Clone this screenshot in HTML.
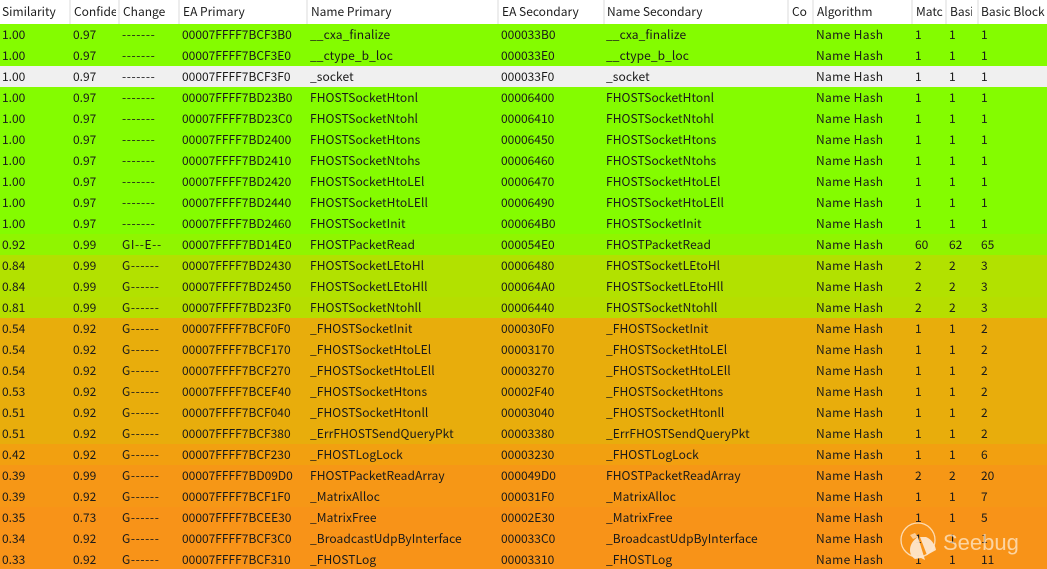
<!DOCTYPE html>
<html><head><meta charset="utf-8"><style>
html,body{margin:0;padding:0;width:1047px;height:569px;overflow:hidden;background:#fff}
body{position:relative;font-family:"Noto Sans CJK SC","Liberation Sans",sans-serif;font-size:12px;color:#1a1a1a}
table{position:absolute;left:0;top:0;width:1047px;table-layout:fixed;border-collapse:collapse}
td,th{padding:0 0 0 3px;height:21px;line-height:21px;white-space:nowrap;overflow:hidden;font-weight:normal;text-align:left;box-sizing:border-box}
th{height:24px;line-height:24px;background:#fff;border-right:2px solid #ededed;color:#1c1c1c}
th div{overflow:hidden;margin-right:2px}
th:nth-child(8) div{margin-right:5px}
th:nth-child(11) div{margin-right:5px}
th:last-child{border-right:0}
td:nth-child(1),th:nth-child(1),td:nth-child(7),th:nth-child(7),th:nth-child(12){padding-left:2px}
td:nth-child(3){padding-left:3px;letter-spacing:.6px}
td:nth-child(9){letter-spacing:.35px}
td:nth-child(5),td:nth-child(7){letter-spacing:.08px}
.a{background:#84fc00}.w{background:#f0f0f0}.b{background:#90f500}.c{background:#b2e100}.c2{background:#b6de00}
.d{background:#e8ad0c}.e{background:#f2a010}.f{background:#f69716}.g{background:#f89318}
</style></head><body>
<table><colgroup><col style="width:70px"><col style="width:49px"><col style="width:60px"><col style="width:128px"><col style="width:191px"><col style="width:106px"><col style="width:184px"><col style="width:25px"><col style="width:99px"><col style="width:34px"><col style="width:32px"><col style="width:69px"></colgroup>
<tr><th><div>Similarity</div></th><th><div>Confidence</div></th><th><div>Change</div></th><th><div>EA Primary</div></th><th><div>Name Primary</div></th><th><div>EA Secondary</div></th><th><div>Name Secondary</div></th><th><div>Comments</div></th><th><div>Algorithm</div></th><th><div>Matched</div></th><th><div>Basic</div></th><th><div>Basic Blocks</div></th></tr>
<tr class="a"><td>1.00</td><td>0.97</td><td>-------</td><td>00007FFFF7BCF3B0</td><td>__cxa_finalize</td><td>000033B0</td><td>__cxa_finalize</td><td></td><td>Name Hash</td><td>1</td><td>1</td><td>1</td></tr>
<tr class="a"><td>1.00</td><td>0.97</td><td>-------</td><td>00007FFFF7BCF3E0</td><td>__ctype_b_loc</td><td>000033E0</td><td>__ctype_b_loc</td><td></td><td>Name Hash</td><td>1</td><td>1</td><td>1</td></tr>
<tr class="w"><td>1.00</td><td>0.97</td><td>-------</td><td>00007FFFF7BCF3F0</td><td>_socket</td><td>000033F0</td><td>_socket</td><td></td><td>Name Hash</td><td>1</td><td>1</td><td>1</td></tr>
<tr class="a"><td>1.00</td><td>0.97</td><td>-------</td><td>00007FFFF7BD23B0</td><td>FHOSTSocketHtonl</td><td>00006400</td><td>FHOSTSocketHtonl</td><td></td><td>Name Hash</td><td>1</td><td>1</td><td>1</td></tr>
<tr class="a"><td>1.00</td><td>0.97</td><td>-------</td><td>00007FFFF7BD23C0</td><td>FHOSTSocketNtohl</td><td>00006410</td><td>FHOSTSocketNtohl</td><td></td><td>Name Hash</td><td>1</td><td>1</td><td>1</td></tr>
<tr class="a"><td>1.00</td><td>0.97</td><td>-------</td><td>00007FFFF7BD2400</td><td>FHOSTSocketHtons</td><td>00006450</td><td>FHOSTSocketHtons</td><td></td><td>Name Hash</td><td>1</td><td>1</td><td>1</td></tr>
<tr class="a"><td>1.00</td><td>0.97</td><td>-------</td><td>00007FFFF7BD2410</td><td>FHOSTSocketNtohs</td><td>00006460</td><td>FHOSTSocketNtohs</td><td></td><td>Name Hash</td><td>1</td><td>1</td><td>1</td></tr>
<tr class="a"><td>1.00</td><td>0.97</td><td>-------</td><td>00007FFFF7BD2420</td><td>FHOSTSocketHtoLEl</td><td>00006470</td><td>FHOSTSocketHtoLEl</td><td></td><td>Name Hash</td><td>1</td><td>1</td><td>1</td></tr>
<tr class="a"><td>1.00</td><td>0.97</td><td>-------</td><td>00007FFFF7BD2440</td><td>FHOSTSocketHtoLEll</td><td>00006490</td><td>FHOSTSocketHtoLEll</td><td></td><td>Name Hash</td><td>1</td><td>1</td><td>1</td></tr>
<tr class="a"><td>1.00</td><td>0.97</td><td>-------</td><td>00007FFFF7BD2460</td><td>FHOSTSocketInit</td><td>000064B0</td><td>FHOSTSocketInit</td><td></td><td>Name Hash</td><td>1</td><td>1</td><td>1</td></tr>
<tr class="b"><td>0.92</td><td>0.99</td><td>GI--E--</td><td>00007FFFF7BD14E0</td><td>FHOSTPacketRead</td><td>000054E0</td><td>FHOSTPacketRead</td><td></td><td>Name Hash</td><td>60</td><td>62</td><td>65</td></tr>
<tr class="c"><td>0.84</td><td>0.99</td><td>G------</td><td>00007FFFF7BD2430</td><td>FHOSTSocketLEtoHl</td><td>00006480</td><td>FHOSTSocketLEtoHl</td><td></td><td>Name Hash</td><td>2</td><td>2</td><td>3</td></tr>
<tr class="c"><td>0.84</td><td>0.99</td><td>G------</td><td>00007FFFF7BD2450</td><td>FHOSTSocketLEtoHll</td><td>000064A0</td><td>FHOSTSocketLEtoHll</td><td></td><td>Name Hash</td><td>2</td><td>2</td><td>3</td></tr>
<tr class="c2"><td>0.81</td><td>0.99</td><td>G------</td><td>00007FFFF7BD23F0</td><td>FHOSTSocketNtohll</td><td>00006440</td><td>FHOSTSocketNtohll</td><td></td><td>Name Hash</td><td>2</td><td>2</td><td>3</td></tr>
<tr class="d"><td>0.54</td><td>0.92</td><td>G------</td><td>00007FFFF7BCF0F0</td><td>_FHOSTSocketInit</td><td>000030F0</td><td>_FHOSTSocketInit</td><td></td><td>Name Hash</td><td>1</td><td>1</td><td>2</td></tr>
<tr class="d"><td>0.54</td><td>0.92</td><td>G------</td><td>00007FFFF7BCF170</td><td>_FHOSTSocketHtoLEl</td><td>00003170</td><td>_FHOSTSocketHtoLEl</td><td></td><td>Name Hash</td><td>1</td><td>1</td><td>2</td></tr>
<tr class="d"><td>0.54</td><td>0.92</td><td>G------</td><td>00007FFFF7BCF270</td><td>_FHOSTSocketHtoLEll</td><td>00003270</td><td>_FHOSTSocketHtoLEll</td><td></td><td>Name Hash</td><td>1</td><td>1</td><td>2</td></tr>
<tr class="d"><td>0.53</td><td>0.92</td><td>G------</td><td>00007FFFF7BCEF40</td><td>_FHOSTSocketHtons</td><td>00002F40</td><td>_FHOSTSocketHtons</td><td></td><td>Name Hash</td><td>1</td><td>1</td><td>2</td></tr>
<tr class="d"><td>0.51</td><td>0.92</td><td>G------</td><td>00007FFFF7BCF040</td><td>_FHOSTSocketHtonll</td><td>00003040</td><td>_FHOSTSocketHtonll</td><td></td><td>Name Hash</td><td>1</td><td>1</td><td>2</td></tr>
<tr class="d"><td>0.51</td><td>0.92</td><td>G------</td><td>00007FFFF7BCF380</td><td>_ErrFHOSTSendQueryPkt</td><td>00003380</td><td>_ErrFHOSTSendQueryPkt</td><td></td><td>Name Hash</td><td>1</td><td>1</td><td>2</td></tr>
<tr class="e"><td>0.42</td><td>0.92</td><td>G------</td><td>00007FFFF7BCF230</td><td>_FHOSTLogLock</td><td>00003230</td><td>_FHOSTLogLock</td><td></td><td>Name Hash</td><td>1</td><td>1</td><td>6</td></tr>
<tr class="f"><td>0.39</td><td>0.99</td><td>G------</td><td>00007FFFF7BD09D0</td><td>FHOSTPacketReadArray</td><td>000049D0</td><td>FHOSTPacketReadArray</td><td></td><td>Name Hash</td><td>2</td><td>2</td><td>20</td></tr>
<tr class="f"><td>0.39</td><td>0.92</td><td>G------</td><td>00007FFFF7BCF1F0</td><td>_MatrixAlloc</td><td>000031F0</td><td>_MatrixAlloc</td><td></td><td>Name Hash</td><td>1</td><td>1</td><td>7</td></tr>
<tr class="g"><td>0.35</td><td>0.73</td><td>G------</td><td>00007FFFF7BCEE30</td><td>_MatrixFree</td><td>00002E30</td><td>_MatrixFree</td><td></td><td>Name Hash</td><td>1</td><td>1</td><td>5</td></tr>
<tr class="g"><td>0.34</td><td>0.92</td><td>G------</td><td>00007FFFF7BCF3C0</td><td>_BroadcastUdpByInterface</td><td>000033C0</td><td>_BroadcastUdpByInterface</td><td></td><td>Name Hash</td><td>1</td><td>1</td><td>1</td></tr>
<tr class="g"><td>0.33</td><td>0.92</td><td>G------</td><td>00007FFFF7BCF310</td><td>_FHOSTLog</td><td>00003310</td><td>_FHOSTLog</td><td></td><td>Name Hash</td><td>1</td><td>1</td><td>11</td></tr>
</table>
<svg style="position:absolute;left:895px;top:518px" width="135" height="51" viewBox="0 0 135 51">
<circle cx="23" cy="22" r="17" fill="none" stroke="#fde9cf" stroke-opacity=".85" stroke-width="1.3"/>
<path d="M25 19 L31 19 C36 21 40 26 41 32 L32 37 Z" fill="#fde6cc" fill-opacity=".95"/>
<path d="M23 19 C18 22 15 27 15 32 C15 36 17 39 20 41 L26 40 L30 42 Z" fill="#fde6cc" fill-opacity=".95"/>
<path d="M15 17 L20 15 L23 19 L18 21 Z" fill="#fde6cc" fill-opacity=".7"/>
<text x="48" y="32" font-family="'Liberation Sans',sans-serif" font-size="22" fill="#fde9cf" fill-opacity=".75">Seebug</text>
</svg>
</body></html>
